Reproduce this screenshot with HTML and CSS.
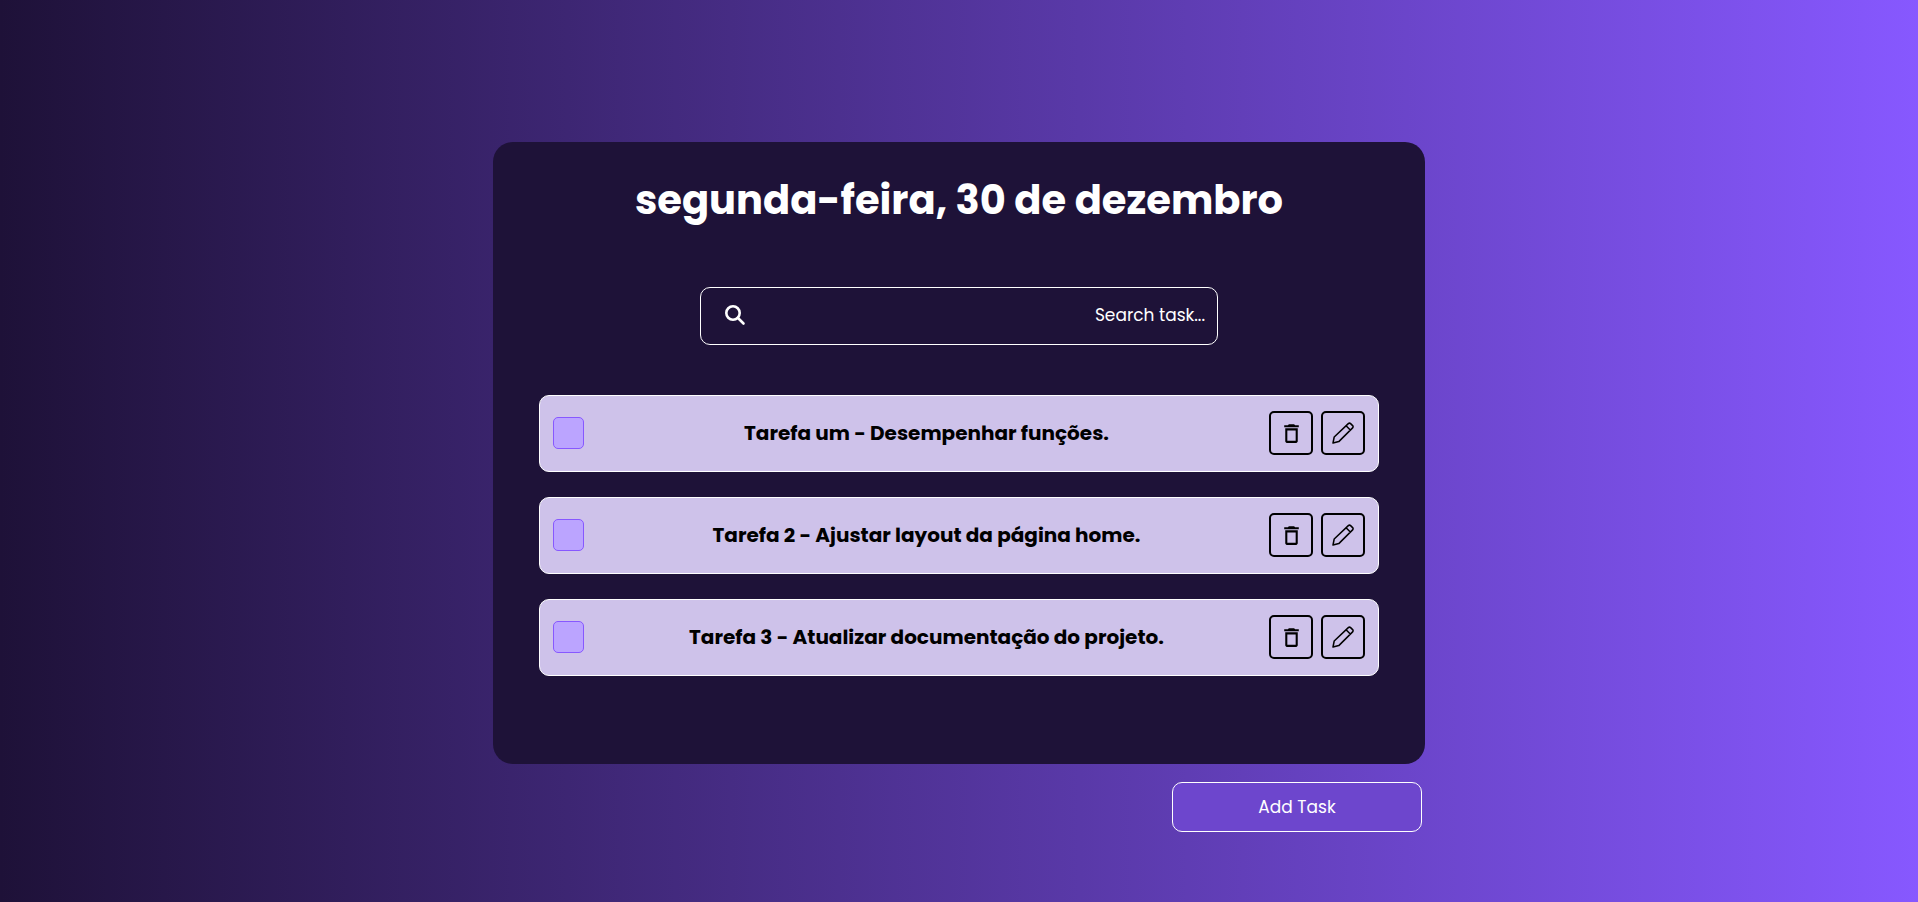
FILE: index.html
```html
<!DOCTYPE html>
<html lang="pt-BR">
<head>
  <meta charset="UTF-8">
  <meta name="viewport" content="width=device-width, initial-scale=1">
  <title>Tarefas</title>
  <link rel="stylesheet" href="styles.css">
</head>
<body>
  <svg class="sprite" aria-hidden="true">
    <symbol id="trash" viewBox="0 0 24 24">
      <path d="M6 19.500c0 .8.7 1.500 1.500 1.500h9c.8 0 1.500-.7 1.500-1.500V7H6v12.500zM8 9h8v10H8V9zm7.500-5l-1-1h-5l-1 1H5v2h14V4z"/>
    </symbol>
    <symbol id="pencil" viewBox="0 0 22 22">
      <path d="M1 21l1.200-6L16.300 1.600q1.200-1 2.300 0l2 2q1 1.100 0 2.300L6.800 19.600zM14.300 4l4 4" fill="none" stroke="#000" stroke-width="1.500" stroke-linejoin="round"/>
    </symbol>
  </svg>

  <main class="page">
    <section class="card">
      <h1 class="date">segunda-feira, 30 de dezembro</h1>

      <form class="search" role="search">
        <svg class="search-icon" viewBox="0 0 24 24" aria-hidden="true">
          <circle cx="10" cy="10" r="6.700"/>
          <path d="M15 15l5.500 5.500"/>
        </svg>
        <input class="search-input" type="text" placeholder="Search task..." aria-label="Search task">
      </form>

      <ul class="tasks">
        <li class="task">
          <input class="task-check" type="checkbox" id="task-1">
          <label class="task-name" for="task-1">Tarefa um - Desempenhar funções.</label>
          <div class="actions">
            <button class="action" type="button" aria-label="Excluir"><svg class="icon-trash"><use href="#trash"/></svg></button>
            <button class="action" type="button" aria-label="Editar"><svg class="icon-pencil"><use href="#pencil"/></svg></button>
          </div>
        </li>
        <li class="task">
          <input class="task-check" type="checkbox" id="task-2">
          <label class="task-name" for="task-2">Tarefa 2 - Ajustar layout da página home.</label>
          <div class="actions">
            <button class="action" type="button" aria-label="Excluir"><svg class="icon-trash"><use href="#trash"/></svg></button>
            <button class="action" type="button" aria-label="Editar"><svg class="icon-pencil"><use href="#pencil"/></svg></button>
          </div>
        </li>
        <li class="task">
          <input class="task-check" type="checkbox" id="task-3">
          <label class="task-name" for="task-3">Tarefa 3 - Atualizar documentação do projeto.</label>
          <div class="actions">
            <button class="action" type="button" aria-label="Excluir"><svg class="icon-trash"><use href="#trash"/></svg></button>
            <button class="action" type="button" aria-label="Editar"><svg class="icon-pencil"><use href="#pencil"/></svg></button>
          </div>
        </li>
      </ul>
    </section>

    <div class="footer">
      <button class="add" type="button">Add Task</button>
    </div>
  </main>
</body>
</html>
```
FILE: styles.css
```css
* {
  box-sizing: border-box;
  margin: 0;
  padding: 0;
}

body {
  min-height: 100vh;
  background: linear-gradient(90deg, #1e1138, #8758ff);
  color: #fff;
  font-family: Poppins, Inter, "Open Sans", sans-serif;
  font-size: 17px;
}

button,
input {
  font: inherit;
  color: inherit;
}

button,
label {
  cursor: pointer;
}

.sprite {
  position: absolute;
  width: 0;
  height: 0;
}

.page {
  width: 90%;
  max-width: 932px;
  margin: 0 auto;
  padding: 142px 0 32px;
  display: flex;
  flex-direction: column;
  gap: 18px;
}

.card {
  display: flex;
  flex-direction: column;
  align-items: center;
  padding: 28px 46px 88px;
  border-radius: 20px;
  background: #1e1238;
}

.date {
  font-size: 40px;
  line-height: 60px;
  font-weight: 700;
  text-align: center;
}

.search {
  display: flex;
  align-items: center;
  width: 100%;
  max-width: 518px;
  height: 58px;
  margin-top: 57px;
  padding: 0 12px 2px 22px;
  border: 1px solid #fff;
  border-radius: 10px;
}

.search-icon {
  flex: none;
  width: 24px;
  height: 24px;
  fill: none;
  stroke: #fff;
  stroke-width: 2.6;
  stroke-linecap: round;
}

.search-input {
  flex: 1;
  min-width: 0;
  border: 0;
  outline: 0;
  background: transparent;
  text-align: right;
}

.search-input::placeholder {
  color: #fff;
  opacity: 1;
}

.tasks {
  display: flex;
  flex-direction: column;
  gap: 25px;
  width: 100%;
  margin-top: 50px;
  list-style: none;
}

.task {
  display: flex;
  align-items: center;
  min-height: 77px;
  padding: 0 13px 1px;
  border: 1px solid #fff;
  border-radius: 10px;
  background: #cec2ea;
  color: #000;
}

.task-check {
  flex: none;
  appearance: none;
  width: 31px;
  height: 32px;
  border: 1px solid #8758ff;
  border-radius: 5px;
  background: #bba4ff;
}

.task-check:checked {
  background: #8758ff;
}

.task-name {
  flex: 1;
  font-size: 20px;
  line-height: 30px;
  font-weight: 700;
  text-align: center;
}

.actions {
  display: flex;
  gap: 8px;
}

.action {
  display: flex;
  align-items: center;
  justify-content: center;
  width: 44px;
  height: 44px;
  border: 2px solid #000;
  border-radius: 5px;
  background: transparent;
}

.icon-trash {
  width: 25px;
  height: 25px;
}

.icon-pencil {
  width: 22px;
  height: 22px;
}

.footer {
  display: flex;
  justify-content: flex-end;
  padding-right: 3px;
}

.add {
  width: 250px;
  height: 50px;
  border: 1px solid #fff;
  border-radius: 10px;
  background: #6d46cd;
}
```
